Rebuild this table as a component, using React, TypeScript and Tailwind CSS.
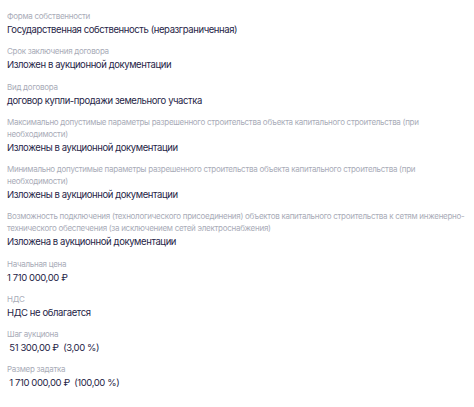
const items: { label: string; value: string }[] = [
  { label: "Форма собственности", value: "Государственная собственность (неразграниченная)" },
  { label: "Срок заключения договора", value: "Изложен в аукционной документации" },
  { label: "Вид договора", value: "договор купли-продажи земельного участка" },
  {
    label:
      "Максимально допустимые параметры разрешенного строительства объекта капитального строительства (при необходимости)",
    value: "Изложены в аукционной документации",
  },
  {
    label:
      "Минимально допустимые параметры разрешенного строительства объекта капитального строительства (при необходимости)",
    value: "Изложены в аукционной документации",
  },
  {
    // перенос как в макете — сразу после "инженерно-"
    label:
      "Возможность подключения (технологического присоединения) объектов капитального строительства к сетям инженерно-\nтехнического обеспечения (за исключением сетей электроснабжения)",
    value: "Изложена в аукционной документации",
  },
  { label: "Начальная цена", value: "1 710 000,00 ₽" },
  { label: "НДС", value: "НДС не облагается" },
  { label: "Шаг аукциона", value: " 51 300,00 ₽  (3,00 %)" },
  { label: "Размер задатка", value: " 1 710 000,00 ₽  (100,00 %)" },
];

export default function App() {
  return (
    <div className="min-h-[407px] w-[474px] bg-white pl-[7px] pr-[8px] pt-[10px] font-['Inter','Noto_Sans',sans-serif]">
      <div className="flex flex-col gap-[7.25px]">
        {items.map((item, i) => (
          <div key={i} className="flex flex-col">
            <div className="whitespace-pre-line text-[8px] leading-[12px] tracking-[-0.28px] text-[#a9acb8]">
              {item.label}
            </div>
            <div className="whitespace-pre text-[9.5px] leading-[16px] tracking-[-0.4px] text-[#1f2547]">
              {item.value}
            </div>
          </div>
        ))}
      </div>
    </div>
  );
}
